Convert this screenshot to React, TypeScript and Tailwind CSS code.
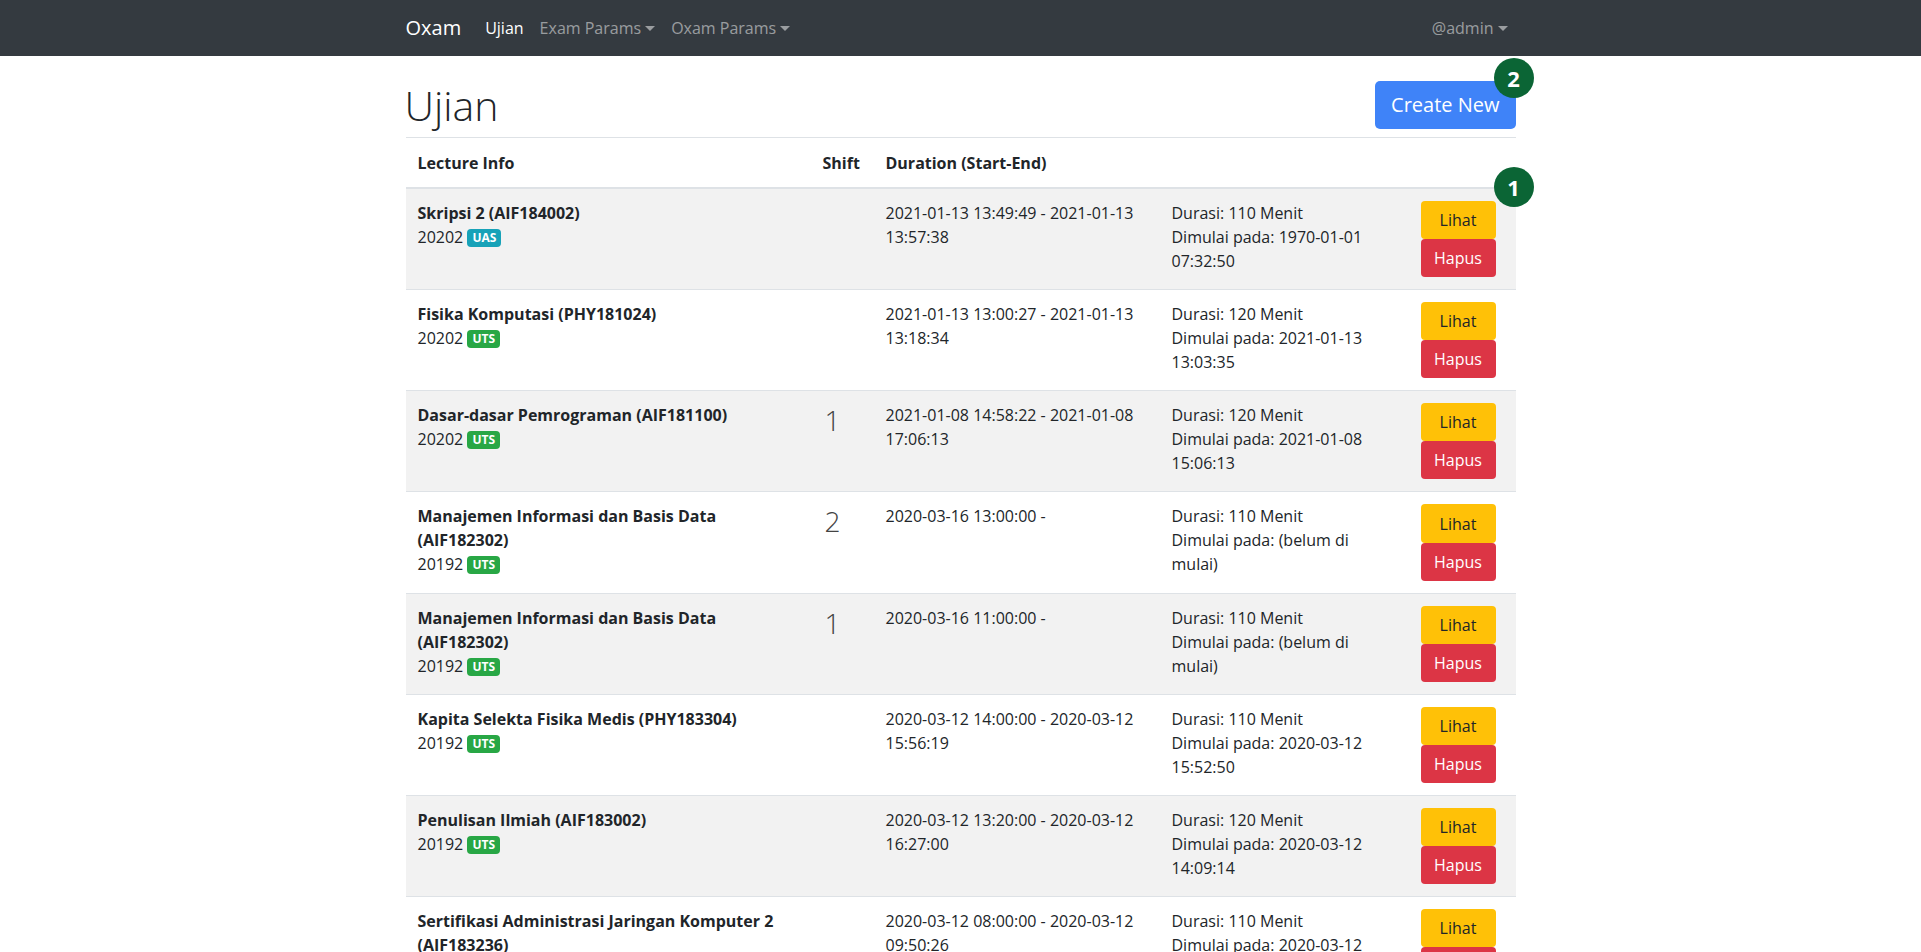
import React from "react";

type Row = {
  name: string;
  sem: string;
  type: "UAS" | "UTS";
  shift: string;
  dur: string;
  menit: number;
  mulai: string;
};

const rows: Row[] = [
  { name: "Skripsi 2 (AIF184002)", sem: "20202", type: "UAS", shift: "", dur: "2021-01-13 13:49:49 - 2021-01-13 13:57:38", menit: 110, mulai: "1970-01-01 07:32:50" },
  { name: "Fisika Komputasi (PHY181024)", sem: "20202", type: "UTS", shift: "", dur: "2021-01-13 13:00:27 - 2021-01-13 13:18:34", menit: 120, mulai: "2021-01-13 13:03:35" },
  { name: "Dasar-dasar Pemrograman (AIF181100)", sem: "20202", type: "UTS", shift: "1", dur: "2021-01-08 14:58:22 - 2021-01-08 17:06:13", menit: 120, mulai: "2021-01-08 15:06:13" },
  { name: "Manajemen Informasi dan Basis Data (AIF182302)", sem: "20192", type: "UTS", shift: "2", dur: "2020-03-16 13:00:00 -", menit: 110, mulai: "(belum di mulai)" },
  { name: "Manajemen Informasi dan Basis Data (AIF182302)", sem: "20192", type: "UTS", shift: "1", dur: "2020-03-16 11:00:00 -", menit: 110, mulai: "(belum di mulai)" },
  { name: "Kapita Selekta Fisika Medis (PHY183304)", sem: "20192", type: "UTS", shift: "", dur: "2020-03-12 14:00:00 - 2020-03-12 15:56:19", menit: 110, mulai: "2020-03-12 15:52:50" },
  { name: "Penulisan Ilmiah (AIF183002)", sem: "20192", type: "UTS", shift: "", dur: "2020-03-12 13:20:00 - 2020-03-12 16:27:00", menit: 120, mulai: "2020-03-12 14:09:14" },
  { name: "Sertifikasi Administrasi Jaringan Komputer 2 (AIF183236)", sem: "20192", type: "UTS", shift: "", dur: "2020-03-12 08:00:00 - 2020-03-12 09:50:26", menit: 110, mulai: "2020-03-12 09:40:12" },
];

function Caret() {
  return (
    <span className="ml-[4px] inline-block align-[3px] w-0 h-0 border-t-[5px] border-t-current border-x-[5px] border-x-transparent" />
  );
}

function Marker({ n }: { n: string }) {
  return (
    <div className="w-10 h-10 rounded-full bg-[#0b6535] text-white flex items-center justify-center text-[22px] font-bold leading-none">
      {n}
    </div>
  );
}

export default function App() {
  return (
    <div className="min-h-screen bg-white text-[#212529] text-base" style={{ fontFamily: "'Open Sans', 'Noto Sans', sans-serif" }}>
      <nav className="bg-[#343a40] h-14">
        <div className="w-[1110px] mx-auto h-full flex items-center">
          <span className="text-white text-[20px] leading-[30px] mr-4">Oxam</span>
          <div className="flex items-center">
            <span className="px-2 text-white leading-6">Ujian</span>
            <span className="px-2 text-white/50 leading-6">Exam Params<Caret /></span>
            <span className="px-2 text-white/50 leading-6">Oxam Params<Caret /></span>
          </div>
          <div className="ml-auto">
            <span className="px-2 text-white/50 leading-6 inline-block">@admin<Caret /></span>
          </div>
        </div>
      </nav>

      <div className="w-[1110px] mx-auto">
        <div className="flex items-center justify-between pt-[25px] pb-2">
          <h1 className="text-[41px] font-light leading-[48px] ml-[-1px]">Ujian</h1>
          <div className="relative">
            <button className="h-12 px-4 rounded-[5px] bg-[#3f83f8] text-white text-[20px] leading-[30px]">Create New</button>
            <div className="absolute right-[-18px] top-[-23px]">
              <Marker n="2" />
            </div>
          </div>
        </div>

        <div className="relative">
          <table className="w-full border-collapse table-fixed">
            <colgroup>
              <col className="w-[405px]" />
              <col className="w-[63px]" />
              <col className="w-[286px]" />
              <col className="w-[249px]" />
              <col />
            </colgroup>
            <thead>
              <tr className="text-left">
                <th className="px-3 pt-[13px] pb-3 font-bold leading-6 border-t border-b-2 border-[#dee2e6]">Lecture Info</th>
                <th className="px-3 pt-[13px] pb-3 font-bold leading-6 border-t border-b-2 border-[#dee2e6]">Shift</th>
                <th className="px-3 pt-[13px] pb-3 font-bold leading-6 border-t border-b-2 border-[#dee2e6] whitespace-nowrap">Duration (Start-End)</th>
                <th className="px-3 pt-[13px] pb-3 border-t border-b-2 border-[#dee2e6]"></th>
                <th className="px-3 pt-[13px] pb-3 border-t border-b-2 border-[#dee2e6]"></th>
              </tr>
            </thead>
            <tbody>
              {rows.map((r, i) => (
                <tr key={i} className={i % 2 === 0 ? "bg-[#f2f2f2]" : "bg-white"}>
                  <td className="px-3 py-3 align-top leading-6 border-t border-[#dee2e6]">
                    <div className="font-bold">{r.name}</div>
                    <div>
                      {r.sem}{" "}
                      <span
                        className={
                          r.type === "UAS"
                            ? "inline-block bg-[#17a2b8] text-white text-[12px] font-bold leading-none px-[5px] py-[3px] rounded-[4px] align-[1px]"
                            : "inline-block bg-[#28a745] text-white text-[12px] font-bold leading-none px-[5px] py-[3px] rounded-[4px] align-[1px]"
                        }
                      >
                        {r.type}
                      </span>
                    </div>
                  </td>
                  <td className="px-3 py-3 align-top border-t border-[#dee2e6]">
                    {r.shift && <div className="text-[28px] font-light leading-[34px] text-[#444] pl-[2px]">{r.shift}</div>}
                  </td>
                  <td className="px-3 py-3 align-top leading-6 border-t border-[#dee2e6]">{r.dur}</td>
                  <td className="px-3 py-3 align-top leading-6 border-t border-[#dee2e6]">
                    <div>Durasi: {r.menit} Menit</div>
                    <div>Dimulai pada: {r.mulai}</div>
                  </td>
                  <td className="px-3 py-3 align-top border-t border-[#dee2e6]">
                    <div className="flex flex-col w-[75px]">
                      <button className="h-[38.08px] rounded-[4px] bg-[#ffc107] text-[#212529] leading-6">Lihat</button>
                      <button className="h-[38.08px] rounded-[4px] bg-[#dc3545] text-white leading-6">Hapus</button>
                    </div>
                  </td>
                </tr>
              ))}
            </tbody>
          </table>
          <div className="absolute right-[-18px] top-[30px]">
            <Marker n="1" />
          </div>
        </div>
      </div>
    </div>
  );
}
